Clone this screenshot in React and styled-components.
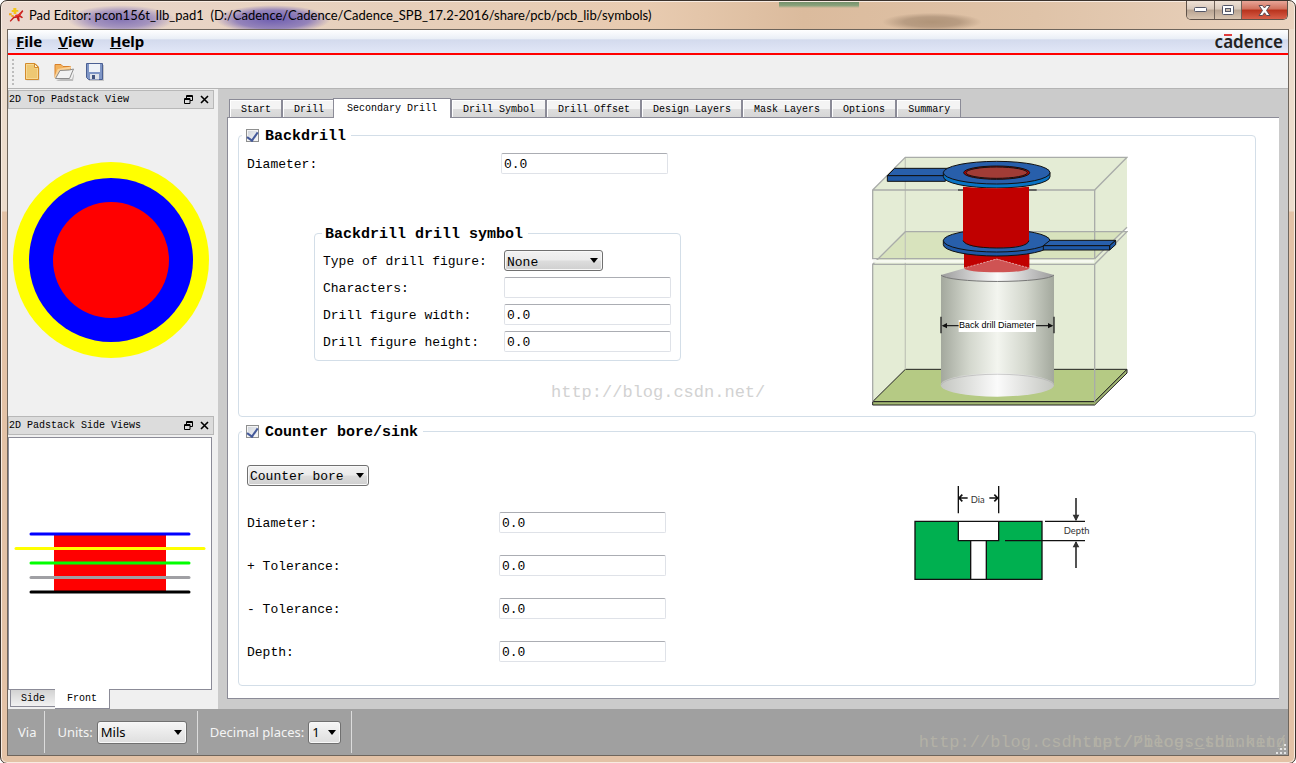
import React, { useState } from 'react'
import styled, { createGlobalStyle, css } from 'styled-components'

const mono = '"Liberation Mono", monospace'
const ui = '"Noto Sans", "Open Sans", sans-serif'
const caption = 'Lato, "Open Sans", sans-serif'

const TABS = [
  'Start',
  'Drill',
  'Secondary Drill',
  'Drill Symbol',
  'Drill Offset',
  'Design Layers',
  'Mask Layers',
  'Options',
  'Summary',
]

function App() {
  const [tab, setTab] = useState('Secondary Drill')
  return (
    <>
      <GlobalStyle />
      <Window>
        <TitleBar />
        <Client>
          <MenuBar />
          <ToolBar />
          <Main>
            <Dock />
            <Workspace>
              <TabList role="tablist">
                {TABS.map((name) => (
                  <Tab
                    key={name}
                    type="button"
                    role="tab"
                    aria-selected={name === tab}
                    $active={name === tab}
                    onClick={() => setTab(name)}
                  >
                    {name}
                  </Tab>
                ))}
              </TabList>
              <TabPanel role="tabpanel">
                <Backdrill />
                <CounterBore />
              </TabPanel>
            </Workspace>
          </Main>
          <StatusBar />
        </Client>
      </Window>
    </>
  )
}

export default App

function TitleBar() {
  return (
    <Title>
      <AppIcon viewBox="0 0 45 45" aria-hidden="true">
        <path d="M13 0h9v6h6v5h-6v7h-8v-6H8V6h5z" fill="#f5c518" />
        <path d="M0 16h8v5h6v6H7v-5H0z" fill="#f2a81d" />
        <path d="M40 6l3 4-9 12 8 6-3 3-8-5 1 14h-5l-4-11-8 2-10 10-3-2 11-13 12-3z" fill="#c8201c" />
        <path d="M18 21l10-2 6-6 2 3-6 8-10 2z" fill="#e8322a" />
      </AppIcon>
      <TitleText>
        Pad Editor: pcon156t_llb_pad1&nbsp; (D:/Cadence/Cadence/Cadence_SPB_17.2-2016/share/pcb/pcb_lib/symbols)
      </TitleText>
      <Caption>
        <CaptionButton type="button" aria-label="Minimize">
          <svg width="13" height="6" viewBox="0 0 13 6">
            <rect x=".5" y=".5" width="12" height="4" rx="1" fill="#fff" stroke="#535666" />
          </svg>
        </CaptionButton>
        <CaptionButton type="button" aria-label="Maximize">
          <svg width="12" height="10" viewBox="0 0 12 10">
            <rect x=".5" y=".5" width="11" height="9" rx="1" fill="#fff" stroke="#535666" />
            <rect x="3.5" y="3.5" width="5" height="3" fill="#c9bcae" stroke="#535666" />
          </svg>
        </CaptionButton>
        <CaptionButton type="button" aria-label="Close" $close>
          <svg width="13" height="11" viewBox="0 0 13 11">
            <path
              d="M1 .5h3.500l2 2.500 2-2.500H12L8.500 5.500l3.500 5H8.500l-2-2.700-2 2.700H1l3.500-5z"
              fill="#fff"
              stroke="#5a4a52"
            />
          </svg>
        </CaptionButton>
      </Caption>
    </Title>
  )
}

function MenuBar() {
  return (
    <Menu>
      {['File', 'View', 'Help'].map((name) => (
        <MenuItem key={name} type="button">
          <u>{name[0]}</u>
          {name.slice(1)}
        </MenuItem>
      ))}
      <Brand>
        c<Macron>a</Macron>dence
      </Brand>
    </Menu>
  )
}

function ToolBar() {
  return (
    <Tools>
      <Grip />
      <ToolButton type="button" aria-label="New">
        <svg viewBox="0 0 20 20">
          <path d="M3.500 2.500h9l4 4v12h-13z" fill="#b9b9b9" opacity=".6" />
          <path d="M2.500 1.500h9.500l3.500 3.500v12.500h-13z" fill="#f6d893" stroke="#d38b2c" />
          <path d="M4 3h7v3.500h3V16H4z" fill="#eec873" />
          <path d="M11.500 1.500v4h4z" fill="#fff3d6" stroke="#d38b2c" />
        </svg>
      </ToolButton>
      <ToolButton type="button" aria-label="Open">
        <svg viewBox="0 0 20 20">
          <path d="M2 18l5-1h11l3-9-2 11H4z" fill="#999" opacity=".6" />
          <path d="M1 15.500V2.500h6l2 2h7.500v4" fill="#f3b25c" stroke="#d9812a" />
          <path d="M1 16L4.500 8 17 5.500" fill="none" stroke="#f9d29a" strokeWidth="2" />
          <path d="M1.500 16.500L6 8.500l9.500-.5 4-1-4 9.500z" fill="#f2f2f2" stroke="#8c8c8c" />
        </svg>
      </ToolButton>
      <ToolButton type="button" aria-label="Save">
        <svg viewBox="0 0 20 20">
          <path d="M3 3h16v16H4z" fill="#aaa" opacity=".6" />
          <path d="M1.500 1.500h16v16H3.500l-2-2z" fill="#7f96c6" stroke="#4a5f93" />
          <path d="M4 2h11v8H4z" fill="#eef2f8" />
          <path d="M5 12h9v5.500H5z" fill="#dfe3ea" />
          <path d="M7 13h3v4H7z" fill="#41537f" />
        </svg>
      </ToolButton>
    </Tools>
  )
}

function DockHeader({ title }) {
  return (
    <DockTitle>
      <h2>{title}</h2>
      <button type="button" aria-label={`Float ${title}`}>
        <svg width="9" height="9" viewBox="0 0 9 9" fill="none" stroke="#000">
          <path d="M2.500 3V.5h6v5H6M2.500 1.500h6" />
          <path d="M.5 3.500h5.500v5H.5zM.5 4.500h5.500" />
        </svg>
      </button>
      <button type="button" aria-label={`Close ${title}`}>
        <svg width="9" height="9" viewBox="0 0 9 9" stroke="#000" strokeWidth="1.600">
          <path d="M1 1l7 7M8 1L1 8" />
        </svg>
      </button>
    </DockTitle>
  )
}

function Dock() {
  return (
    <DockColumn>
      <DockHeader title="2D Top Padstack View" />
      <TopView>
        <svg width="196" height="196" viewBox="0 0 196 196" role="img" aria-label="Padstack top view">
          <circle cx="98" cy="98" r="98" fill="#ff0" />
          <circle cx="98" cy="98" r="82" fill="#00f" />
          <circle cx="98" cy="98" r="58" fill="#f00" />
        </svg>
      </TopView>
      <DockHeader title="2D Padstack Side Views" />
      <SideView>
        <svg width="192" height="62" viewBox="0 0 192 62" role="img" aria-label="Padstack front view">
          <path d="M40 1h112v60H40z" fill="#f00" />
          <g fill="none" strokeWidth="3" strokeLinecap="round">
            <path d="M17 2h158" stroke="#00f" />
            <path d="M2 16.500h188" stroke="#ff0" />
            <path d="M17 31h158" stroke="#0f0" />
            <path d="M17 45.500h158" stroke="#a0a0a4" />
            <path d="M17 60h158" stroke="#000" />
          </g>
        </svg>
      </SideView>
      <BottomTabs role="tablist">
        <BottomTab type="button" role="tab" aria-selected="false">Side</BottomTab>
        <BottomTab type="button" role="tab" aria-selected="true" $active>Front</BottomTab>
      </BottomTabs>
    </DockColumn>
  )
}

function Field({ id, label, value = '0.0', labelWidth }) {
  return (
    <Row $labelWidth={labelWidth}>
      <label htmlFor={id}>{label}</label>
      <TextBox id={id} type="text" defaultValue={value} />
    </Row>
  )
}

function Backdrill() {
  return (
    <Group>
      <Legend>
        <CheckLabel>
          <CheckBox type="checkbox" defaultChecked />
          Backdrill
        </CheckLabel>
      </Legend>
      <Split>
        <BackdrillForm>
          <Field id="bd-diameter" label="Diameter:" labelWidth={254} />
          <SymbolGroup>
            <Legend $plain>Backdrill drill symbol</Legend>
            <SymbolFields>
              <Row $labelWidth={181}>
                <label htmlFor="bd-figure">Type of drill figure:</label>
                <SelectBox $width={99}>
                  <select id="bd-figure" defaultValue="None">
                    <option>None</option>
                    <option>Circle</option>
                    <option>Square</option>
                  </select>
                </SelectBox>
              </Row>
              <Field id="bd-chars" label="Characters:" value="" labelWidth={181} />
              <Field id="bd-width" label="Drill figure width:" labelWidth={181} />
              <Field id="bd-height" label="Drill figure height:" labelWidth={181} />
            </SymbolFields>
          </SymbolGroup>
          <Watermark>http://blog.csdn.net/</Watermark>
        </BackdrillForm>
        <Figure>
          <BackdrillDrawing />
        </Figure>
      </Split>
    </Group>
  )
}

function CounterBore() {
  return (
    <Group>
      <Legend>
        <CheckLabel>
          <CheckBox type="checkbox" defaultChecked />
          Counter bore/sink
        </CheckLabel>
      </Legend>
      <Split>
        <CounterForm>
          <SelectBox $width={122}>
            <select aria-label="Counter type" defaultValue="Counter bore">
              <option>Counter bore</option>
              <option>Counter sink</option>
            </select>
          </SelectBox>
          <CounterFields>
            <Field id="cb-diameter" label="Diameter:" labelWidth={252} />
            <Field id="cb-plus" label="+ Tolerance:" labelWidth={252} />
            <Field id="cb-minus" label="- Tolerance:" labelWidth={252} />
            <Field id="cb-depth" label="Depth:" labelWidth={252} />
          </CounterFields>
        </CounterForm>
        <Figure>
          <CounterDrawing />
        </Figure>
      </Split>
    </Group>
  )
}

function BackdrillDrawing() {
  return (
    <svg width="256" height="251" viewBox="36 48 768 753" role="img" aria-label="Back drill diameter">
      <defs>
        <linearGradient id="steel">
          <stop offset="0" stopColor="#a3a89d" />
          <stop offset=".25" stopColor="#d3d7cd" />
          <stop offset=".5" stopColor="#f3f5ef" />
          <stop offset=".75" stopColor="#d3d7cd" />
          <stop offset="1" stopColor="#a3a89d" />
        </linearGradient>
        <linearGradient id="cone">
          <stop offset="0" stopColor="#9c9c9c" />
          <stop offset=".5" stopColor="#fafafa" />
          <stop offset="1" stopColor="#9c9c9c" />
        </linearGradient>
        <linearGradient id="base">
          <stop offset="0" stopColor="#c4c6c1" />
          <stop offset=".5" stopColor="#fbfbfb" />
          <stop offset="1" stopColor="#c4c6c1" />
        </linearGradient>
      </defs>
      {/* board volumes */}
      <path d="M38 150L136 52H801V262L704 356H38z" fill="#e4ecd5" />
      <path d="M38 373L136 275H801V688L704 785H38z" fill="#e4ecd5" />
      <path d="M55 356L136 275H787L704 356z" fill="#d8e3bd" />
      <path d="M38 785L136 688H801L704 785z" fill="#b5ca84" stroke="#222" strokeWidth="3" />
      <path d="M38 785H704L801 688V699L704 795H38z" fill="#a3b873" stroke="#222" strokeWidth="3" />
      <g fill="none" stroke="#a9aca9" strokeWidth="4">
        <path d="M136 52V688" stroke="#c3c8ba" />
        <path d="M38 150L136 52H801L704 150z" />
        <path d="M38 150V356H704V150" />
        <path d="M38 373L136 275H801L704 373z" />
        <path d="M38 373V785M704 373V785M801 262L704 356" />
      </g>
      <path d="M40 364H702" stroke="#f6f9f0" strokeWidth="8" />
      <path d="M294 150H530" stroke="#444" strokeWidth="4" />
      {/* traces, pads and barrel */}
      <g stroke="#111" strokeWidth="3" strokeLinejoin="round">
        <path d="M82 107L104 85H270V107z" fill="#285fab" />
        <path d="M82 107H256V124H82z" fill="#1f58a5" />
        <path d="M250 98V110A160 34 0 0 0 570 110V98z" fill="#0873c4" />
        <ellipse cx="410" cy="98" rx="160" ry="34" fill="#285fab" />
        <ellipse cx="410" cy="98" rx="99" ry="20" fill="#c00000" />
        <ellipse cx="410" cy="98" rx="92" ry="17" fill="#a13c36" />
      </g>
      <path d="M312 330H508V384H312z" fill="#c00000" />
      <g stroke="#111" strokeWidth="3" strokeLinejoin="round">
        <path d="M250 302V314A160 34 0 0 0 570 314V302z" fill="#1f58a5" />
        <ellipse cx="410" cy="302" rx="160" ry="34" fill="#285fab" />
        <path d="M550 317L570 301H767L749 317z" fill="#285fab" />
        <path d="M550 317H749V330H550zM749 317L767 301V314L749 330z" fill="#1f58a5" />
      </g>
      <path d="M309 140Q410 150 507 140V302Q500 323 410 324T309 302z" fill="#c00000" />
      <path d="M309 302Q320 323 410 324T507 302" fill="none" stroke="#111" strokeWidth="3" />
      {/* drill bit */}
      <path d="M243 405L410 357L582 405A170 21 0 0 1 243 405z" fill="url(#cone)" />
      <path d="M312 385L410 357L508 385A98 12 0 0 1 312 385z" fill="#cf5353" />
      <path d="M312 384L410 357L508 384" fill="none" stroke="#f0c4c4" strokeWidth="2" strokeDasharray="6 4" />
      <path d="M243 405A170 21 0 0 0 582 405V735A170 35 0 0 1 243 735z" fill="url(#steel)" />
      <ellipse cx="412" cy="735" rx="170" ry="35" fill="url(#base)" />
      <path d="M243 735A170 35 0 0 1 582 735" fill="none" stroke="#b3b3b3" strokeWidth="2" />
      <path d="M243 405A170 21 0 0 0 582 405" fill="none" stroke="#777" strokeWidth="3" />
      {/* dimension line */}
      <path d="M243 530V580M582 530V580M250 557H575" stroke="#222" strokeWidth="4" />
      <path d="M245 557l16-8v16zM580 557l-16-8v16z" fill="#111" />
      <path d="M296 540H528V576H296z" fill="#fff" />
      <text x="410" y="564" textAnchor="middle" fontFamily="Liberation Sans, sans-serif" fontSize="27">
        Back drill Diameter
      </text>
    </svg>
  )
}

function CounterDrawing() {
  return (
    <svg width="184" height="156" viewBox="54 48 552 468" role="img" aria-label="Counter bore dimensions">
      <path d="M75 154H456V328H75z" fill="#00b050" />
      <path d="M205 154H326V212H205zM242 212H289V328H242z" fill="#fff" />
      <g fill="none" stroke="#111" strokeWidth="4">
        <path d="M75 154H456V328H75zM205 154V212H326V154M242 212V328M289 212V328" />
        <path d="M205 48V130M326 48V130M465 154H585M345 212H585" />
        <path d="M208 84H233M298 84H322M217 74L207 84L217 94M313 74L323 84L313 94" strokeWidth="5" />
      </g>
      <g fill="none" stroke="#333" strokeWidth="5">
        <path d="M558 84V150M558 216V294" />
      </g>
      <path d="M548 134H568L558 154zM548 232H568L558 213z" fill="#333" />
      <g fontFamily="Lato, Open Sans, sans-serif" fontSize="28" fill="#333" textAnchor="middle">
        <text x="263" y="99">Dia</text>
        <text x="560" y="192">Depth</text>
      </g>
    </svg>
  )
}

function StatusBar() {
  return (
    <Status>
      <StatusCell>Via</StatusCell>
      <StatusCell>
        <label htmlFor="units">Units:</label>
        <SelectBox $width={90} $ui>
          <select id="units" defaultValue="Mils">
            <option>Mils</option>
            <option>Inch</option>
            <option>Millimeter</option>
          </select>
        </SelectBox>
      </StatusCell>
      <StatusCell>
        <label htmlFor="decimals">Decimal places:</label>
        <SelectBox $width={33} $ui>
          <select id="decimals" defaultValue="1">
            <option>0</option>
            <option>1</option>
            <option>2</option>
          </select>
        </SelectBox>
      </StatusCell>
      <StatusMark>http://blog.csdn.net/Pieces_thinking</StatusMark>
      <StatusMark>http://blog.csdn.net/</StatusMark>
      <SizeGrip width="10" height="10" viewBox="0 0 10 10" aria-hidden="true">
        <path d="M8 0h2v2H8zM4 4h2v2H4zM8 4h2v2H8zM0 8h2v2H0zM4 8h2v2H4zM8 8h2v2H8z" fill="#e4e4e4" />
      </SizeGrip>
    </Status>
  )
}

const GlobalStyle = createGlobalStyle`
  *{
    box-sizing: border-box;
  }
  body{
    margin: 0;
    background: #fff;
    color: #000;
  }
  button, input, select{
    font: inherit;
    color: inherit;
  }
`

/* window frame */

const Window = styled.div`
  min-height: 100vh;
  display: flex;
  flex-direction: column;
  padding: 0 6px 7px;
  border: 1px solid #3b332d;
  border-radius: 7px;
  box-shadow: inset 0 0 0 1px #f8ece2;
  background:
    radial-gradient(ellipse at 50% 60%, #8474b4 0%, #9484bccc 40%, transparent 70%) 66px 4px / 108px 24px no-repeat,
    radial-gradient(ellipse at 50% 60%, #6e5eb0 0%, #8070b8cc 45%, transparent 70%) 214px 4px / 116px 24px no-repeat,
    linear-gradient(#74906a, #8ba37c 60%, transparent) 778px 1px / 80px 6px no-repeat,
    radial-gradient(ellipse at center, #b09478 0%, #b89c82 40%, transparent 72%) 882px 12px / 98px 18px no-repeat,
    linear-gradient(90deg, #ead9cf 0%, #e6cfbb 30%, #e8cbb0 50%, #dbbb9d 62%, #dfc3a8 80%, #ead3bf 100%) 0 0 / 100% 28px no-repeat,
    linear-gradient(#ecdccc 0 210px, #e3c2a6 211px);
`

const Title = styled.header`
  display: flex;
  align-items: center;
  height: 28px;
  padding: 0 1px 0 2px;
`

const AppIcon = styled.svg`
  width: 15px;
  height: 15px;
`

const TitleText = styled.h1`
  flex: 1;
  margin: 0 0 0 5px;
  font: 13px/20px ${caption};
  white-space: nowrap;
`

const Caption = styled.div`
  display: flex;
  align-self: flex-start;
  border: 1px solid #5f5249;
  border-top: 0;
  border-radius: 0 0 5px 5px;
  overflow: hidden;
`

const CaptionButton = styled.button`
  display: grid;
  place-items: center;
  width: ${({ $close }) => ($close ? 46 : 27)}px;
  height: 18px;
  padding: 0;
  border: 0;
  background: linear-gradient(#efe2d6 0, #d9c9ba 45%, #b8a492 50%, #d8c4b0 100%);
  & + &{
    border-left: 1px solid #6f6259;
  }
  ${({ $close }) =>
    $close &&
    css`
      background: linear-gradient(#e8a698 0, #d0705c 45%, #b8321c 50%, #d8604a 100%);
    `}
`

const Client = styled.div`
  flex: 1;
  display: flex;
  flex-direction: column;
  border: 1px solid #6e655c;
  background: #f0f0f0;
`

const Menu = styled.nav`
  display: flex;
  align-items: center;
  height: 25px;
  padding: 0 5px 0 0;
  border-bottom: 2px solid #f00;
  background: linear-gradient(#fff 0, #e9eef6 40%, #d3daed 42%, #e2e7f7 100%);
`

const MenuItem = styled.button`
  padding: 0 8px;
  border: 0;
  background: none;
  font: bold 15px/21px ${ui};
`

const Brand = styled.span`
  margin-left: auto;
  color: #222;
  font: 600 17px/21px ${ui};
`

const Macron = styled.span`
  position: relative;
  &::before{
    content: '';
    position: absolute;
    top: 4px;
    left: 1px;
    right: 1px;
    height: 2px;
    background: #e03c3c;
  }
`

const Tools = styled.div`
  display: flex;
  align-items: center;
  gap: 11px;
  height: 34px;
  padding-left: 4px;
  border-bottom: 1px solid #b4b4b4;
`

const Grip = styled.span`
  width: 2px;
  height: 26px;
  background: repeating-linear-gradient(#bdbdbd 0 2px, transparent 2px 4px);
`

const ToolButton = styled.button`
  width: 20px;
  height: 20px;
  padding: 0;
  border: 0;
  background: none;
  ${Grip} + &{
    margin-left: -2px;
  }
  svg{
    display: block;
    width: 20px;
    height: 20px;
  }
`

const Main = styled.div`
  flex: 1;
  display: flex;
`

/* left dock */

const DockColumn = styled.aside`
  flex: none;
  width: 210px;
  display: flex;
  flex-direction: column;
  padding: 1px 4px 0 0;
`

const DockTitle = styled.div`
  display: flex;
  align-items: center;
  gap: 7px;
  height: 19px;
  padding: 0 4px 0 0;
  border: 1px solid #b8b8b8;
  background: #dcdcdc;
  h2{
    flex: 1;
    margin: 0;
    font: 10px/19px ${mono};
  }
  button{
    padding: 0;
    border: 0;
    background: none;
    line-height: 0;
  }
`

const TopView = styled.div`
  flex: 6;
  display: grid;
  place-items: center;
  padding-bottom: 5px;
`

const SideView = styled.div`
  flex: 5;
  display: grid;
  place-items: center;
  margin: 2px 2px 0 0;
  border: 1px solid #8b8b97;
  background: #fff;
`

const BottomTabs = styled.div`
  display: flex;
  align-items: flex-start;
  height: 19px;
  padding-left: 2px;
`

const BottomTab = styled.button`
  height: 17px;
  padding: 0 10px;
  border: 1px solid #8b8b97;
  border-top: 0;
  background: linear-gradient(#d2d2d2, #f2f2f2);
  font: 10px/17px ${mono};
  ${({ $active }) =>
    $active &&
    css`
      height: 20px;
      padding: 0 12px;
      margin: -1px 0 0 -1px;
      border-left: 0;
      background: #fff;
      line-height: 20px;
    `}
`

/* tabs */

const Workspace = styled.main`
  flex: 1;
  min-width: 0;
  display: flex;
  flex-direction: column;
  padding: 9px 9px 10px;
  background: #cbcbcb;
`

const TabList = styled.div`
  display: flex;
  align-items: flex-end;
  padding-left: 2px;
`

const Tab = styled.button`
  height: 18px;
  padding: 2px 10px 0 11px;
  border: 1px solid #8b8b97;
  border-bottom: 0;
  background: linear-gradient(#f4f4f4 0 50%, #dedede 55%, #d6d6d6);
  box-shadow: inset 1px 1px 0 #fff;
  font: 10px/15px ${mono};
  white-space: nowrap;
  ${({ $active }) =>
    $active &&
    css`
      position: relative;
      height: 20px;
      padding: 0 13px;
      margin: 0 0 -1px -2px;
      background: #fff;
    `}
`

const TabPanel = styled.section`
  flex: 1;
  padding: 6px 23px 12px 10px;
  border: 1px solid #8b8b97;
  border-right: 0;
  background: #fff;
`

/* groups */

const Group = styled.fieldset`
  min-width: 0;
  margin: 0;
  padding: 0;
  border: 1px solid #d3dee8;
  border-radius: 4px;
  font: 13px/21px ${mono};
  & + &{
    margin-top: 3px;
  }
`

const Legend = styled.legend`
  height: 22px;
  margin-left: ${({ $plain }) => ($plain ? 7 : 3)}px;
  padding: 0 5px 0 ${({ $plain }) => ($plain ? 3 : 4)}px;
  font: bold 15px/25px ${mono};
`

const CheckLabel = styled.label`
  display: flex;
  align-items: center;
  gap: 6px;
`

const CheckBox = styled.input`
  appearance: none;
  display: grid;
  justify-content: center;
  width: 13px;
  height: 13px;
  margin: 0 0 3px;
  border: 1px solid #8e8f8f;
  background: linear-gradient(135deg, #cdd2da, #fafafa);
  box-shadow: inset 0 0 0 1px #f4f4f4;
  &:checked::after{
    content: '';
    width: 5px;
    height: 9px;
    border: solid #44599a;
    border-width: 0 2px 2px 0;
    transform: rotate(35deg);
  }
`

const Split = styled.div`
  display: grid;
  grid-template-columns: 1fr 1fr;
`

const BackdrillForm = styled.div`
  padding: 7px 0 55px 8px;
`

const Row = styled.div`
  display: grid;
  grid-template: 21px / ${({ $labelWidth }) => $labelWidth}px 167px;
  line-height: 23px;
`

const TextBox = styled.input`
  width: 100%;
  height: 21px;
  padding: 2px 2px 0;
  border: 1px solid #dfe2e8;
  border-top-color: #abadb3;
  border-radius: 2px;
  background: #fff;
`

const SelectBox = styled.span`
  position: relative;
  width: ${({ $width }) => $width}px;
  select{
    appearance: none;
    display: block;
    width: 100%;
    height: ${({ $ui }) => ($ui ? 23 : 21)}px;
    padding: 0 2px;
    border: 1px solid #707070;
    border-radius: 3px;
    background: linear-gradient(#f2f2f2 0, #ebebeb 49%, #dddddd 51%, #cfcfcf 100%);
    box-shadow: inset 0 0 0 1px #f8f8f8;
    color: #000;
  }
  &::after{
    content: '';
    position: absolute;
    top: 8px;
    right: 5px;
    border: 4px solid transparent;
    border-top: 5px solid #000;
    border-bottom: 0;
    pointer-events: none;
  }
  ${({ $ui }) =>
    $ui &&
    css`
      select{
        padding: 0 3px;
        background: linear-gradient(#f6f6f6, #dedede);
      }
      &::after{
        top: 9px;
      }
    `}
`

const SymbolGroup = styled.fieldset`
  width: 367px;
  margin: 48px 0 0 67px;
  padding: 0;
  border: 1px solid #d3dee8;
  border-radius: 4px;
`

const SymbolFields = styled.div`
  display: grid;
  gap: 6px;
  padding: 6px 9px 8px 8px;
`

const Figure = styled.div`
  display: grid;
  place-items: center;
  padding-right: 2px;
`

const CounterForm = styled.div`
  display: flex;
  flex-direction: column;
  padding: 23px 0 23px 8px;
`

const CounterFields = styled.div`
  display: grid;
  gap: 22px;
  margin-top: 26px;
`

const Watermark = styled.span`
  position: absolute;
  margin: 20px 0 0 304px;
  color: #d2d2d2;
  font: 17px/24px ${mono};
  pointer-events: none;
`

/* status bar */

const Status = styled.footer`
  position: relative;
  display: flex;
  align-items: center;
  height: 46px;
  background: #a0a0a0;
  color: #f4f4f4;
  font: 13px/20px ${ui};
`

const StatusCell = styled.div`
  display: flex;
  align-items: center;
  gap: 4px;
  height: 42px;
  padding: 0 10px 0 12px;
  border-right: 1px solid #dcdcdc;
  &:first-child{
    padding: 0 8px 0 10px;
  }
`

const StatusMark = styled.span`
  position: absolute;
  right: 2px;
  bottom: 0;
  color: #b3b1a6;
  font: 17px/24px ${mono};
  pointer-events: none;
`

const SizeGrip = styled.svg`
  position: absolute;
  right: 2px;
  bottom: 1px;
`
